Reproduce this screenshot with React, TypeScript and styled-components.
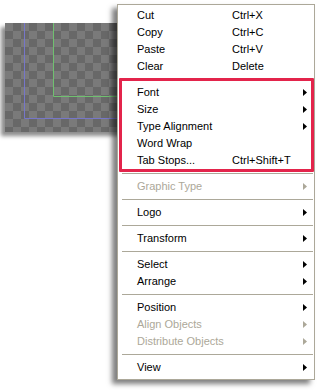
import React from 'react';
import styled, { createGlobalStyle } from 'styled-components';

const GlobalStyle = createGlobalStyle`
    html, body {
        margin: 0;
        padding: 0;
        background: #ffffff;
    }
    body {
        font-family: "Liberation Sans", Arial, sans-serif;
    }
`;

const Stage = styled.div`
    position: relative;
    width: 318px;
    height: 390px;
    overflow: hidden;
    background: #ffffff;
`;

const Canvas = styled.div`
    margin: 23px 0 0 5px;
    width: 135px;
    height: 109px;
    box-shadow: -4px 4px 4px rgba(0, 0, 0, 0.45);
    background-color: #7a7a7a;
    background-image:
        linear-gradient(45deg, #686868 25%, transparent 25%, transparent 75%, #686868 75%),
        linear-gradient(45deg, #686868 25%, transparent 25%, transparent 75%, #686868 75%);
    background-size: 16px 16px;
    background-position: 0 0, 8px 8px;

    svg {
        display: block;
    }
`;

// context menu lies over the canvas
const Menu = styled.div`
    position: absolute;
    left: 117px;
    top: 4px;
    width: 196px;
    padding: 2px 0 3px;
    background: #ffffff;
    border: 1px solid #aca899;
    box-shadow: -5px 4px 5px rgba(0, 0, 0, 0.5);
    font-size: 11px;
    color: #000000;
`;

const Row = styled.div<{ $disabled?: boolean }>`
    display: grid;
    grid-template-columns: 95px 1fr 8px;
    align-items: center;
    height: 17px;
    padding: 0 7px 0 19px;
    color: ${p => (p.$disabled ? '#aca899' : '#000000')};
    white-space: nowrap;
    line-height: 17px;
`;

const Shortcut = styled.span``;

const Arrow = styled.svg`
    justify-self: end;
`;

const Separator = styled.div`
    height: 9px;
    display: flex;
    align-items: center;
    padding: 0 1px 0 4px;

    &::after {
        content: '';
        flex: 1;
        height: 1px;
        background: #aca899;
    }
`;

const Highlight = styled.div`
    position: relative;

    &::after {
        content: '';
        position: absolute;
        top: -6px;
        bottom: -3px;
        left: 1px;
        right: 0;
        border: 3px solid #e3244b;
        border-radius: 1px;
        pointer-events: none;
    }
`;

interface Item {
    label?: string;
    shortcut?: string;
    sub?: boolean;
    disabled?: boolean;
    sep?: boolean;
}

const editItems: Item[] = [
    { label: 'Cut', shortcut: 'Ctrl+X' },
    { label: 'Copy', shortcut: 'Ctrl+C' },
    { label: 'Paste', shortcut: 'Ctrl+V' },
    { label: 'Clear', shortcut: 'Delete' },
];

const typeItems: Item[] = [
    { label: 'Font', sub: true },
    { label: 'Size', sub: true },
    { label: 'Type Alignment', sub: true },
    { label: 'Word Wrap' },
    { label: 'Tab Stops...', shortcut: 'Ctrl+Shift+T' },
];

const restItems: Item[] = [
    { sep: true },
    { label: 'Graphic Type', sub: true, disabled: true },
    { sep: true },
    { label: 'Logo', sub: true },
    { sep: true },
    { label: 'Transform', sub: true },
    { sep: true },
    { label: 'Select', sub: true },
    { label: 'Arrange', sub: true },
    { sep: true },
    { label: 'Position', sub: true },
    { label: 'Align Objects', sub: true, disabled: true },
    { label: 'Distribute Objects', sub: true, disabled: true },
    { sep: true },
    { label: 'View', sub: true },
];

const renderItem = (item: Item, i: number) => {
    if (item.sep) return <Separator key={'s' + i} />;
    return (
        <Row key={item.label} $disabled={item.disabled}>
            <span>{item.label}</span>
            <Shortcut>{item.shortcut}</Shortcut>
            {item.sub ? (
                <Arrow width="4" height="7" viewBox="0 0 4 7">
                    <polygon points="0,0 4,3.5 0,7" fill={item.disabled ? '#aca899' : '#000'} />
                </Arrow>
            ) : <span />}
        </Row>
    );
};

const App = () => {
    return (
        <React.Fragment>
            <GlobalStyle />
            <Stage>
                <Canvas>
                    <svg width="135" height="109">
                        {/* artboard guides */}
                        <polyline points="19.5,0 19.5,95.5 135,95.5" fill="none" stroke="#7676c9" strokeWidth="1" />
                        <polyline points="48.5,0 48.5,73.5 135,73.5" fill="none" stroke="#70c070" strokeWidth="1" />
                    </svg>
                </Canvas>
                <Menu>
                    {editItems.map(renderItem)}
                    <Separator />
                    <Highlight>
                        {typeItems.map(renderItem)}
                    </Highlight>
                    {restItems.map(renderItem)}
                </Menu>
            </Stage>
        </React.Fragment>
    );
};

export default App;
